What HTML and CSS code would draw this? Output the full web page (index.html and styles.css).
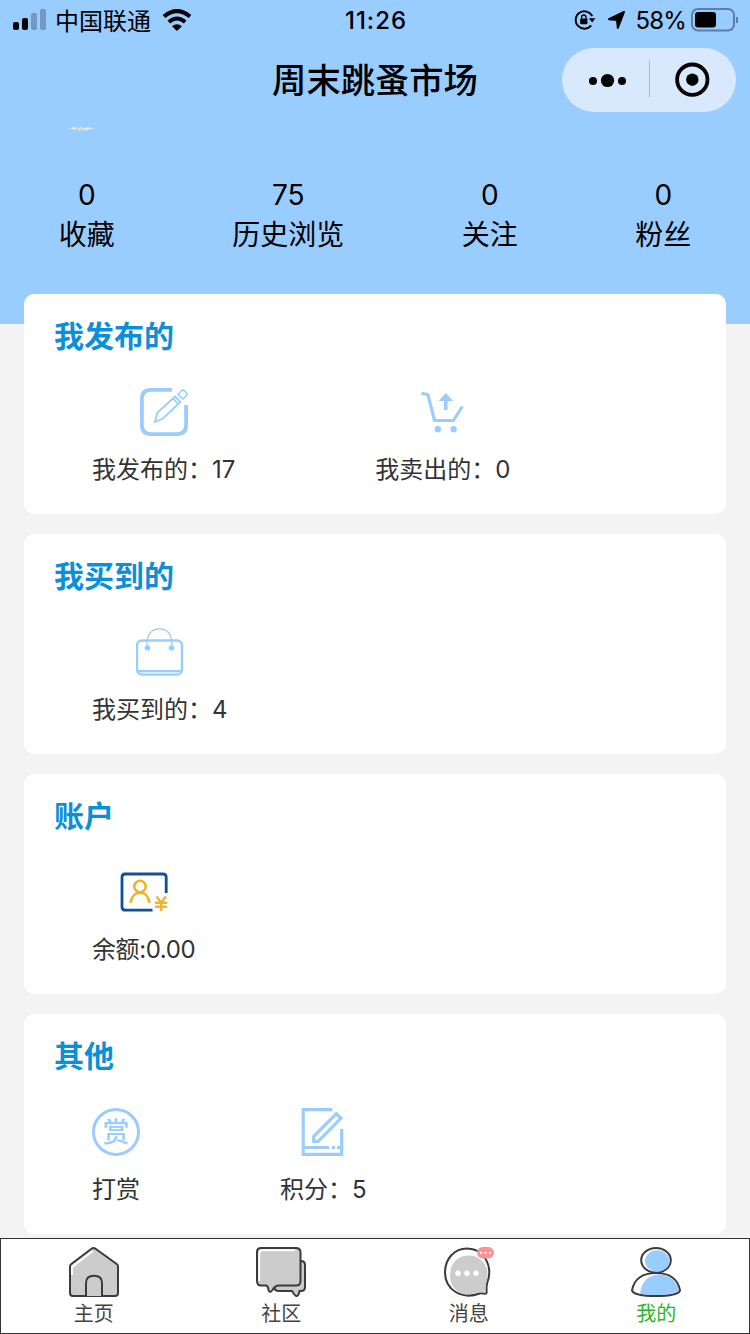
FILE: index.html
```html
<!DOCTYPE html>
<html lang="zh-CN">
<head>
    <meta charset="UTF-8">
    <title>周末跳蚤市场</title>
    <link rel="stylesheet" href="styles.css">
</head>
<body>
    <header class="header">
        <div class="status-bar">
            <div class="status-left">
                <svg class="signal" width="34" height="22" viewBox="0 0 34 22">
                    <rect x="0" y="13" width="6" height="8" rx="2"/>
                    <rect x="9" y="9" width="6" height="12" rx="2"/>
                    <rect x="18" y="4" width="6" height="17" rx="2" opacity=".25"/>
                    <rect x="27" y="0" width="6" height="21" rx="2" opacity=".25"/>
                </svg>
                <span class="carrier">中国联通</span>
                <svg class="wifi" width="30" height="22" viewBox="0 0 30 22">
                    <path d="M2 7.5 Q15 -3.2 28 7.5" fill="none" stroke="#000" stroke-width="4"/>
                    <path d="M6.8 13 Q15 6 23.2 13" fill="none" stroke="#000" stroke-width="3.8"/>
                    <path d="M10 17.2 Q15 13.2 20 17.2 L15 22Z"/>
                </svg>
            </div>
            <div class="time">11:26</div>
            <div class="status-right">
                <svg width="22" height="20" viewBox="0 0 22 20">
                    <path d="M18.2 6.2 A8.7 8.7 0 1 0 17.2 15.4" fill="none" stroke="#000" stroke-width="1.9"/>
                    <path d="M14.8 8.2H21.5L18.2 12.4Z"/>
                    <rect x="6.2" y="8.6" width="7.2" height="5.6" rx="1"/>
                    <path d="M7.6 9V7.2a2.2 2.2 0 0 1 4.4 0V9" fill="none" stroke="#000" stroke-width="1.3"/>
                </svg>
                <svg class="arrow" width="19" height="19" viewBox="0 0 19 19">
                    <path d="M17 1L10.8 17L10 9L2 8.2Z" stroke="#000" stroke-width="2" stroke-linejoin="round"/>
                </svg>
                <span class="percent">58%</span>
                <svg class="battery" width="48" height="24" viewBox="0 0 48 24">
                    <rect x="1" y="1" width="42" height="21.5" rx="6" fill="none" stroke="#5d7fa5" stroke-width="2"/>
                    <rect x="4" y="4" width="21" height="15.5" rx="3"/>
                    <path d="M46 9v6" stroke="#5d7fa5" stroke-width="2"/>
                </svg>
            </div>
        </div>
        <div class="nav-bar">
            <h1>周末跳蚤市场</h1>
            <div class="capsule">
                <svg width="174" height="64" viewBox="0 0 174 64">
                    <circle cx="31" cy="33" r="4"/>
                    <circle cx="45.5" cy="32.5" r="6.6"/>
                    <circle cx="60" cy="33" r="4"/>
                    <path d="M87.5 12v37" stroke="#a9b9cc"/>
                    <circle cx="130.3" cy="31.7" r="15.2" fill="none" stroke="#000" stroke-width="3.8"/>
                    <circle cx="130.3" cy="31.7" r="6.2"/>
                </svg>
            </div>
        </div>
        <svg class="avatar" width="28" height="5" viewBox="0 0 28 5">
            <path d="M0 1h28L18 3.5h-9z" fill="#d9e2dc"/>
            <path d="M7 2h9" stroke="#bfae7d" stroke-dasharray="3 2"/>
            <path d="M4 1h5M12 1h3M18 1h4" stroke="#fffbe9"/>
        </svg>
        <div class="stats">
            <div class="stat"><span>0</span><span>收藏</span></div>
            <div class="stat"><span>75</span><span>历史浏览</span></div>
            <div class="stat"><span>0</span><span>关注</span></div>
            <div class="stat"><span>0</span><span>粉丝</span></div>
        </div>
    </header>

    <main class="cards">
        <section class="card">
            <h2>我发布的</h2>
            <div class="items">
                <div class="item">
                    <svg width="48" height="48" viewBox="0 0 48 48" fill="none" stroke="#9acdfd">
                        <path d="M32 1.9H11Q1.9 1.9 1.9 11V37Q1.9 46.1 11 46.1H37Q46.1 46.1 46.1 37V17" stroke-width="3.8"/>
                        <path d="M15 34L17.5 24.5L35 8.5L40.5 14L23 30.5ZM33 10.5L38.3 16" stroke-width="1.8"/>
                        <path d="M38 6.5L41.5 2.8Q43 1.5 44.5 3L46.3 4.8Q47.6 6.2 46.2 7.7L43 11Z" stroke-width="1.6"/>
                    </svg>
                    <p>我发布的：17</p>
                </div>
                <div class="item">
                    <svg width="48" height="48" viewBox="0 0 48 48" fill="none" stroke="#9acdfd">
                        <path d="M2.5 5.2L9 6.8L15.5 32.5H34.5L43.3 18.5" stroke-width="3.2"/>
                        <path d="M26.8 22V11" stroke-width="3.6"/>
                        <path d="M19.5 13L26.8 5L34.1 13Z" fill="#9acdfd" stroke="none"/>
                        <circle cx="18.8" cy="41.3" r="3.2" fill="#9acdfd" stroke="none"/>
                        <circle cx="34.6" cy="41.3" r="3.2" fill="#9acdfd" stroke="none"/>
                    </svg>
                    <p>我卖出的：0</p>
                </div>
            </div>
        </section>

        <section class="card">
            <h2>我买到的</h2>
            <div class="items">
                <div class="item">
                    <svg width="48" height="48" viewBox="0 0 48 48" fill="none" stroke="#9acdfd">
                        <rect x="1" y="12.5" width="45" height="34" rx="5" stroke-width="2.4"/>
                        <path d="M2 43H45" stroke-width="2"/>
                        <path d="M4 45H43" stroke="#c9e4fe" stroke-width="1.5"/>
                        <path d="M11 20V14C12 5 16.5 .8 23.5 .8S35 5 36 14V20" stroke-width="1.2"/>
                        <circle cx="11.5" cy="20" r="2.8" fill="#9acdfd" stroke="none"/>
                        <circle cx="35.5" cy="20" r="2.8" fill="#9acdfd" stroke="none"/>
                    </svg>
                    <p>我买到的：4</p>
                </div>
            </div>
        </section>

        <section class="card">
            <h2>账户</h2>
            <div class="items">
                <div class="item balance">
                    <svg width="48" height="48" viewBox="0 0 48 48" fill="none">
                        <path d="M32.5 42.2H5.2Q2 42.2 2 39V9.2Q2 6 5.2 6H43Q46.2 6 46.2 9.2V25" stroke="#10509f" stroke-width="2.8"/>
                        <g stroke="#f1b52b" stroke-width="2.6">
                            <circle cx="20" cy="18.5" r="5.7"/>
                            <path d="M10.5 35C11.5 28 15 24.7 20 24.7S28.5 28 29.5 35"/>
                            <path d="M36.5 28.5L41.2 34.5L46 28.5M41.2 34.5V43M35.2 34.8H47.2M35.2 38.8H47.2" stroke-width="2.4"/>
                        </g>
                    </svg>
                    <p>余额:0.00</p>
                </div>
            </div>
        </section>

        <section class="card">
            <h2>其他</h2>
            <div class="items">
                <div class="item">
                    <div class="reward">赏</div>
                    <p>打赏</p>
                </div>
                <div class="item">
                    <svg width="48" height="48" viewBox="0 0 48 48" fill="none" stroke="#9acdfd" stroke-width="3.2">
                        <path d="M33.5 1.7H4.2V46.3H42.7V21M4.2 39.5H30M33 39.5H36M38 39.5H43"/>
                        <path d="M14.7 28.5L37.3 5.7L41.8 10.3L19.2 33.3H14.7Z"/>
                    </svg>
                    <p>积分：5</p>
                </div>
            </div>
        </section>
    </main>

    <footer class="tab-bar">
        <div class="tab">
            <svg width="50" height="50" viewBox="0 0 50 50" fill="#ccc" stroke="#3b3b3d" stroke-width="2">
                <path d="M1 22.5V19.5Q1 18 2.3 17L22.5 1.8Q24.5 .3 26.5 1.8L47.7 17Q49 18 49 19.5V46Q49 49 46 49H4Q1 49 1 46Z"/>
                <path d="M3 28V20L23.5 4.3" fill="none" stroke="#fff"/>
                <path d="M17 49V36Q17 28.7 25 28.7T33 36V49"/>
            </svg>
            <span>主页</span>
        </div>
        <div class="tab">
            <svg width="50" height="50" viewBox="0 0 50 50" fill="#ccc" stroke="#3b3b3d" stroke-width="2">
                <path d="M40 14H45Q49 14 49 18V40Q49 44 45 44H43.5Q42.5 49 40.5 49Q39 49 36 44H23Q18 44 18 39V14Z"/>
                <path d="M5 1H40Q44.5 1 44.5 5.5V34Q44.5 38.5 40 38.5H23Q19 38.5 16.5 43Q13.5 47 12.5 43Q12 38.5 9.5 38.5H5Q1 38.5 1 34V5Q1 1 5 1Z"/>
                <path d="M3.2 34V7Q3.2 3.2 7 3.2H39" fill="none" stroke="#fff"/>
            </svg>
            <span>社区</span>
        </div>
        <div class="tab">
            <svg width="50" height="50" viewBox="0 0 50 50">
                <path d="M43.2 36C42 40 42.8 43.5 42.6 45.8C42 48 38.5 45.8 35.5 46.5C18 53 1 43 1 25.5C1 11.5 10.5 1.5 23 1.5C40 1.5 49.5 19 43.2 36Z" fill="#fff" stroke="#3b3b3d" stroke-width="2"/>
                <path d="M42 36C41 39 41.6 42 41.5 44.8L35 45C17 52 6 42 6 28.5C6 16 14 8.5 25 8.5C38 8.5 47.5 21 42 36Z" fill="#ccc"/>
                <g fill="#fff">
                    <circle cx="14" cy="26.3" r="2.7"/><circle cx="23" cy="26.3" r="2.7"/><circle cx="32" cy="26.3" r="2.7"/>
                </g>
                <rect x="33" y="0" width="17" height="11.5" rx="5.7" fill="#ff9294"/>
                <g fill="#fff">
                    <circle cx="37" cy="5.8" r="1.1"/><circle cx="41.5" cy="5.8" r="1.1"/><circle cx="46" cy="5.8" r="1.1"/>
                </g>
            </svg>
            <span>消息</span>
        </div>
        <div class="tab active">
            <svg width="50" height="50" viewBox="0 0 50 50">
                <path d="M1 43.5C3 32 12 26 25 26S47 32 49 43.5C47.5 47 38 49 25 49S2.5 47 1 43.5Z" fill="#fff" stroke="#3b3b3d" stroke-width="2"/>
                <path d="M9 46.5C11 34 17 28.5 28 27.3C38 28 45.5 33 47.8 43C45 46.5 38 48 25 48Q15 48 9 46.5Z" fill="#9cf"/>
                <ellipse cx="25" cy="13.3" rx="14.8" ry="12.3" fill="#fff" stroke="#3b3b3d" stroke-width="2"/>
                <ellipse cx="26.3" cy="14" rx="12.3" ry="10.7" fill="#9cf"/>
            </svg>
            <span>我的</span>
        </div>
    </footer>
</body>
</html>
```

FILE: styles.css
```css
* {
    box-sizing: border-box;
    margin: 0;
    padding: 0;
}

body {
    height: 1334px;
    display: flex;
    flex-direction: column;
    overflow: hidden;
    background: #f3f3f3;
    color: #000;
    font-family: Inter, "Noto Sans CJK SC", sans-serif;
}

svg {
    display: block;
    flex-shrink: 0;
}

.header {
    height: 324px;
    flex-shrink: 0;
    background: #9cf;
}

.status-bar {
    display: grid;
    grid-template-columns: 1fr auto 1fr;
    align-items: center;
    height: 40px;
    padding: 0 11px 0 13px;
}

.status-left, .status-right {
    display: flex;
    align-items: center;
}

.status-right {
    justify-content: flex-end;
}

.carrier {
    margin: 0 11px 0 8px;
    padding-top: 3px;
    font-size: 24px;
    line-height: 37px;
}

.time {
    padding-top: 1px;
    font-size: 24px;
    font-weight: 500;
    letter-spacing: 1px;
}

.arrow {
    margin: 0 9px 0 11px;
}

.percent {
    margin-right: 5px;
    padding-top: 1px;
    font-size: 24px;
    letter-spacing: -0.8px;
}

.nav-bar {
    position: relative;
    height: 80px;
    padding-top: 2px;
    line-height: 78px;
    text-align: center;
}

.nav-bar h1 {
    font-size: 34.3px;
    font-weight: 500;
}

.capsule {
    position: absolute;
    top: 8px;
    right: 14px;
    width: 174px;
    height: 64px;
    border-radius: 32px;
    background: #d8e9fd;
}

.avatar {
    margin: 7px 0 0 68px;
}

.stats {
    display: flex;
    justify-content: space-around;
    margin-top: 43px;
}

.stat {
    display: flex;
    flex-direction: column;
    align-items: center;
    font-size: 28px;
    line-height: 40px;
}

.cards {
    display: flex;
    flex: 1;
    flex-direction: column;
    gap: 20px;
    min-height: 0;
    margin-top: -30px;
    padding: 0 24px;
}

.card {
    flex: 0 0 220px;
    padding: 20px 30px 0;
    border-radius: 10px;
    background: #fff;
}

.card h2 {
    color: #0c8fd9;
    font-size: 30px;
    font-weight: 600;
    line-height: 44px;
}

.items {
    display: flex;
    gap: 140px;
    margin-top: 30px;
    padding-left: 38px;
}

.item {
    display: flex;
    flex-direction: column;
    align-items: center;
    color: #333;
    font-size: 24px;
    line-height: 36px;
    white-space: nowrap;
}

.item p {
    margin-top: 16px;
}

.balance {
    letter-spacing: -0.4px;
}

.reward {
    width: 48px;
    height: 48px;
    border: 3px solid #9acdfd;
    border-radius: 50%;
    color: #9acdfd;
    font-size: 27px;
    font-weight: 500;
    line-height: 43px;
    text-align: center;
}

.tab-bar {
    display: flex;
    flex: 0 0 96px;
    background: #fff;
    box-shadow: inset 0 0 0 1px #333;
}

.tab {
    display: flex;
    flex: 1;
    flex-direction: column;
    align-items: center;
    padding-top: 9px;
    color: #444;
    font-size: 20px;
    line-height: 34px;
}

.tab.active {
    color: #2bb52b;
}
```
